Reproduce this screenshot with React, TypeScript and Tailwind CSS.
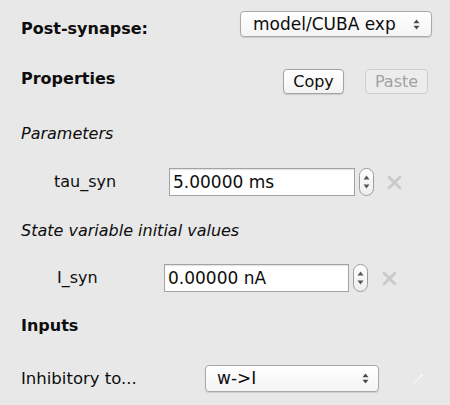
import React from 'react';

function SelectArrows() {
  return (
    <svg width="7" height="11" viewBox="0 0 7 11" className="shrink-0">
      <path d="M3.5 0.5 L6.5 4.2 L0.5 4.2 Z" fill="#4a4a4a" />
      <path d="M3.5 10.5 L6.5 6.8 L0.5 6.8 Z" fill="#4a4a4a" />
    </svg>
  );
}

function PopupSelect({ value, className }: { value: string; className: string }) {
  return (
    <div
      className={`flex items-center justify-between rounded-[4px] border border-[#a9a9a9] bg-gradient-to-b from-white to-[#f4f4f4] shadow-[0_1px_1px_rgba(0,0,0,0.12)] ${className}`}
    >
      <span className="text-[17px] leading-none text-[#0d0d0d]">{value}</span>
      <SelectArrows />
    </div>
  );
}

function Stepper() {
  return (
    <div className="ml-[4px] flex h-[28px] w-[15px] flex-col items-center justify-between rounded-full border border-[#9c9c9c] bg-gradient-to-b from-white to-[#eeeeee] py-[6px]">
      <svg width="7" height="5" viewBox="0 0 7 5">
        <path d="M3.5 0.5 L6.5 4.5 L0.5 4.5 Z" fill="#555" />
      </svg>
      <svg width="7" height="5" viewBox="0 0 7 5">
        <path d="M3.5 4.5 L6.5 0.5 L0.5 0.5 Z" fill="#555" />
      </svg>
    </div>
  );
}

function ClearIcon({ className }: { className: string }) {
  return (
    <svg width="15" height="15" viewBox="0 0 15 15" className={className}>
      <path d="M2.2 2.2 L12.8 12.8 M12.8 2.2 L2.2 12.8" stroke="#cacaca" strokeWidth="3" strokeLinecap="round" />
    </svg>
  );
}

function NumberField({ value, width }: { value: string; width: string }) {
  return (
    <div
      className={`flex h-[28px] items-center border border-[#a3a3a3] bg-white pl-[3px] shadow-[inset_0_1px_1px_rgba(0,0,0,0.12)] ${width}`}
    >
      <span className="text-[17px] leading-none text-[#0d0d0d]">{value}</span>
    </div>
  );
}

export default function App() {
  return (
    <div className="flex h-[405px] w-[450px] flex-col bg-[#e8e8e8] pl-[21px] pr-[18px] font-['DejaVu_Sans',sans-serif] text-[16px] leading-[20px] text-[#0d0d0d]">
      {/* post-synapse model */}
      <div className="flex items-start justify-between pt-[11px]">
        <span className="mt-[8px] font-bold">Post-synapse:</span>
        <PopupSelect value="model/CUBA exp" className="h-[26px] w-[192px] pl-[12px] pr-[11px]" />
      </div>

      {/* properties */}
      <div className="mt-[30px] flex items-start justify-between">
        <span className="font-bold">Properties</span>
        <div className="mr-[4px] flex gap-[21px]">
          <div className="flex h-[25px] w-[61px] items-center justify-center rounded-[4px] border border-[#a3a3a3] bg-gradient-to-b from-white to-[#f3f3f3] shadow-[0_1px_1px_rgba(0,0,0,0.12)]">
            Copy
          </div>
          <div className="flex h-[25px] w-[63px] items-center justify-center rounded-[4px] border border-[#cdcdcd] bg-[#ececec] text-[#a2a2a2]">
            Paste
          </div>
        </div>
      </div>

      <div className="mt-[30px] italic">Parameters</div>

      <div className="mt-[24px] flex items-center">
        <span className="ml-[33px] w-[115px]">tau_syn</span>
        <NumberField value="5.00000 ms" width="w-[186px]" />
        <Stepper />
        <ClearIcon className="ml-[13px]" />
      </div>

      <div className="mt-[25px] italic">State variable initial values</div>

      <div className="mt-[23px] flex items-center">
        <span className="ml-[36px] w-[107px]">I_syn</span>
        <NumberField value="0.00000 nA" width="w-[185px]" />
        <Stepper />
        <ClearIcon className="ml-[14px]" />
      </div>

      <div className="mt-[24px] font-bold">Inputs</div>

      <div className="mt-[29px] flex items-center">
        <span className="w-[184px] text-[16.5px]">Inhibitory to...</span>
        <PopupSelect value="w->I" className="h-[27px] w-[174px] pl-[11px] pr-[9px]" />
        <svg width="12" height="12" viewBox="0 0 12 12" className="ml-[33px]">
          <path d="M1.5 10.5 L9.5 2.5" stroke="#f4f4f4" strokeWidth="1.4" strokeLinecap="round" />
          <circle cx="9.5" cy="2.5" r="1.4" fill="#f6f6f6" />
        </svg>
      </div>
    </div>
  );
}
